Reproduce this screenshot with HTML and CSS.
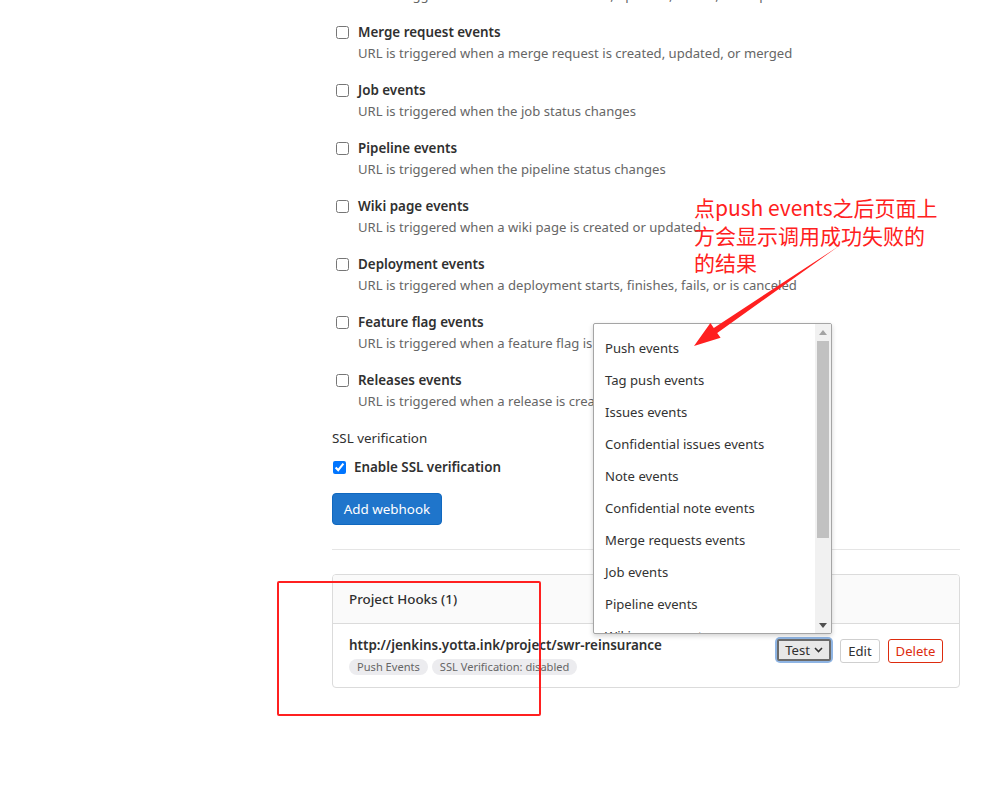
FILE: index.html
```html
<!DOCTYPE html>
<html>
<head>
<meta charset="utf-8">
<link rel="stylesheet" href="styles.css">
</head>
<body>
<div class="page">
  <div class="content">
    <div class="events">
      <div class="event">
        <label class="ev-label"><input type="checkbox" class="cb"> Issues events</label>
        <div class="ev-desc">URL is triggered when an issue is created, updated, closed, or reopened</div>
      </div>
      <div class="event">
        <label class="ev-label"><input type="checkbox" class="cb">Merge request events</label>
        <div class="ev-desc">URL is triggered when a merge request is created, updated, or merged</div>
      </div>
      <div class="event">
        <label class="ev-label"><input type="checkbox" class="cb">Job events</label>
        <div class="ev-desc">URL is triggered when the job status changes</div>
      </div>
      <div class="event">
        <label class="ev-label"><input type="checkbox" class="cb">Pipeline events</label>
        <div class="ev-desc">URL is triggered when the pipeline status changes</div>
      </div>
      <div class="event">
        <label class="ev-label"><input type="checkbox" class="cb">Wiki page events</label>
        <div class="ev-desc">URL is triggered when a wiki page is created or updated</div>
      </div>
      <div class="event">
        <label class="ev-label"><input type="checkbox" class="cb">Deployment events</label>
        <div class="ev-desc">URL is triggered when a deployment starts, finishes, fails, or is canceled</div>
      </div>
      <div class="event">
        <label class="ev-label"><input type="checkbox" class="cb">Feature flag events</label>
        <div class="ev-desc">URL is triggered when a feature flag is turned on or off</div>
      </div>
      <div class="event">
        <label class="ev-label"><input type="checkbox" class="cb">Releases events</label>
        <div class="ev-desc">URL is triggered when a release is created or updated</div>
      </div>
    </div>

    <div class="ssl-title">SSL verification</div>
    <label class="ssl-check"><input type="checkbox" class="cb cb-ssl" checked>Enable SSL verification</label>

    <button class="btn-primary">Add webhook</button>

    <hr class="sep">

    <div class="card">
      <div class="card-header">Project Hooks (1)</div>
      <div class="card-body">
        <div class="hook-info">
          <div class="hook-url">http://jenkins.yotta.ink/project/swr-reinsurance</div>
          <div class="badges">
            <span class="badge">Push Events</span>
            <span class="badge">SSL Verification: disabled</span>
          </div>
        </div>
        <div class="hook-actions">
          <span class="focus-ring"><button class="btn btn-test">Test <svg class="chev" width="9" height="6" viewBox="0 0 9 6"><path d="M1 1l3.5 3.5L8 1" fill="none" stroke="#333" stroke-width="1.6"/></svg></button></span>
          <button class="btn btn-edit">Edit</button>
          <button class="btn btn-danger">Delete</button>
        </div>
      </div>
    </div>
  </div>

  <div class="dropdown">
    <ul class="dd-list">
      <li>Push events</li>
      <li>Tag push events</li>
      <li>Issues events</li>
      <li>Confidential issues events</li>
      <li>Note events</li>
      <li>Confidential note events</li>
      <li>Merge requests events</li>
      <li>Job events</li>
      <li>Pipeline events</li>
      <li>Wiki page events</li>
    </ul>
    <div class="scrollbar">
      <svg class="sb-up" width="8" height="5" viewBox="0 0 8 5"><path d="M0 5L4 0L8 5Z" fill="#a3a3a3"/></svg>
      <div class="sb-thumb"></div>
      <svg class="sb-down" width="8" height="5" viewBox="0 0 8 5"><path d="M0 0L4 5L8 0Z" fill="#505050"/></svg>
    </div>
  </div>

  <div class="note">点push events之后页面上<br>方会显示调用成功失败的<br>的结果</div>

  <svg class="arrow" width="1007" height="785" viewBox="0 0 1007 785">
    <polygon points="839,246 717.2,332.9 720.6,337.8 694,346 710.4,323.0 713.8,327.9" fill="#ff2020"/>
  </svg>

  <div class="redbox"></div>
</div>
</body>
</html>
```

FILE: styles.css
```css
html, body {
  margin: 0;
  padding: 0;
  background: #fff;
}
body {
  font-family: "Noto Sans", "Open Sans", sans-serif;
  color: #303030;
  overflow: hidden;
}
.page {
  position: relative;
  width: 1007px;
  height: 785px;
  overflow: hidden;
}
.content {
  margin-left: 332px;
  width: 628px;
  margin-top: -36px;
}
.events {
  padding-left: 4px;
}
.event {
  margin-bottom: 17px;
}
.ev-label {
  display: flex;
  align-items: center;
  height: 20px;
  font-size: 13.4px;
  font-weight: 600;
  color: #303030;
}
.cb {
  width: 13px;
  height: 13px;
  margin: 0 9px 0 0;
  flex: none;
}
.ev-desc {
  margin-top: 1px;
  padding-left: 22px;
  height: 20px;
  line-height: 20px;
  font-size: 13.1px;
  color: #666;
  white-space: nowrap;
}
.ssl-title {
  height: 20px;
  line-height: 20px;
  font-size: 13.4px;
  color: #303030;
}
.ssl-check {
  display: flex;
  align-items: center;
  margin-top: 9px;
  height: 20px;
  font-size: 13.4px;
  font-weight: 600;
  padding-left: 1px;
}
.cb-ssl {
  margin-right: 8px;
}
.btn-primary {
  display: block;
  margin-top: 16px;
  height: 32px;
  width: 110px;
  padding: 0;
  background: #1f75cb;
  border: 1px solid #1068bf;
  border-radius: 4px;
  color: #fff;
  font-family: inherit;
  font-size: 13.4px;
}
.sep {
  margin: 24px 0 0 0;
  border: 0;
  border-top: 1px solid #e5e5e5;
  height: 0;
}
.card {
  margin-top: 24px;
  border: 1px solid #dbdbdb;
  border-radius: 4px;
  overflow: hidden;
}
.card-header {
  height: 48px;
  line-height: 48px;
  padding-left: 16px;
  background: #fafafa;
  border-bottom: 1px solid #dbdbdb;
  font-size: 13.4px;
  font-weight: 500;
  color: #303030;
}
.card-body {
  display: flex;
  justify-content: space-between;
  padding: 11px 16px 12px 16px;
}
.hook-url {
  height: 20px;
  line-height: 20px;
  font-size: 13.4px;
  font-weight: 600;
  color: #303030;
}
.badges {
  display: flex;
  gap: 4px;
  margin-top: 4px;
}
.badge {
  background: #ececef;
  color: #666;
  font-size: 11.1px;
  height: 16px;
  line-height: 16px;
  padding: 0 8px;
  border-radius: 8px;
}
.hook-actions {
  display: flex;
  align-items: flex-start;
  margin-top: 4px;
}
.btn {
  height: 24px;
  padding: 0 7px;
  font-family: inherit;
  font-size: 13.1px;
  background: #fff;
  border: 1px solid #cfcfcf;
  border-radius: 3px;
  color: #303030;
}
.focus-ring {
  display: inline-flex;
  margin: -2px 0 0 0;
  padding: 2px;
  border-radius: 5px;
  background: #8fb5e4;
}
.btn-test {
  height: 22px;
  background: #e8e8e8;
  border: 2px solid #6b6b6b;
  border-radius: 2px;
  padding: 0 6px 0 6px;
  display: inline-flex;
  align-items: center;
  gap: 4px;
}
.btn-edit {
  margin-left: 7px;
  width: 40px;
  padding: 0;
}
.btn-danger {
  margin-left: 8px;
  width: 55px;
  padding: 0;
  color: #dd2b0e;
  border-color: #dd2b0e;
}
.dropdown {
  position: absolute;
  left: 593px;
  top: 323px;
  width: 237px;
  height: 309px;
  border: 1px solid #a5a5a5;
  border-radius: 2px;
  background: #fff;
  box-shadow: 0 2px 5px rgba(0,0,0,0.18);
  overflow: hidden;
  display: flex;
}
.dd-list {
  list-style: none;
  margin: 0;
  padding: 8px 0 0 0;
  flex: 1;
}
.dd-list li {
  height: 32px;
  line-height: 32px;
  padding-left: 11px;
  font-size: 13.1px;
  color: #333;
  white-space: nowrap;
}
.scrollbar {
  width: 16px;
  background: #f1f1f1;
  display: flex;
  flex-direction: column;
  align-items: center;
}
.sb-up {
  margin-top: 6px;
}
.sb-thumb {
  width: 12px;
  height: 197px;
  margin-top: 6px;
  background: #c1c1c1;
}
.sb-down {
  margin-top: auto;
  margin-bottom: 5px;
}
.note {
  position: absolute;
  left: 694px;
  top: 194px;
  font-family: "Noto Sans CJK SC", sans-serif;
  font-size: 21px;
  line-height: 27.5px;
  color: #ff2020;
  white-space: nowrap;
}
.arrow {
  position: absolute;
  left: 0;
  top: 0;
}
.redbox {
  position: absolute;
  left: 277px;
  top: 581px;
  width: 260px;
  height: 131px;
  border: 2px solid #ff2020;
  border-radius: 2px;
}
```
